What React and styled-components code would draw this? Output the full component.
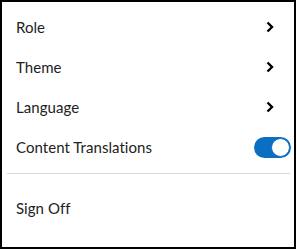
import React, { useState } from 'react';
import styled, { createGlobalStyle } from 'styled-components';

const GlobalStyle = createGlobalStyle`
  html, body {
    margin: 0;
    padding: 0;
    background: #fff;
  }
  body {
    font-family: Lato, 'Liberation Sans', sans-serif;
  }
`;

const Menu = styled.div`
  box-sizing: border-box;
  width: 296px;
  height: 249px;
  border: 2px solid #000;
  background: #fff;
  padding-top: 5px;
  display: flex;
  flex-direction: column;
`;

const Row = styled.div`
  height: 40px;
  display: flex;
  align-items: center;
  justify-content: space-between;
  padding: 0 ${(p) => p.$right}px 0 14px;
  cursor: pointer;
`;

const Label = styled.span`
  font-size: 15px;
  color: #222;
  letter-spacing: 0.05px;
`;

const Divider = styled.hr`
  border: 0;
  border-top: 1px solid #d9d9d9;
  margin: 6px 4px 14px 5px;
`;

const Track = styled.button`
  position: relative;
  width: 37px;
  height: 21px;
  border-radius: 11px;
  border: 0;
  padding: 0;
  background: ${(p) => (p.$on ? '#0a6fc2' : '#9aa0a6')};
  cursor: pointer;
`;

const Knob = styled.span`
  position: absolute;
  top: 1px;
  left: ${(p) => (p.$on ? '17px' : '1px')};
  width: 17px;
  height: 17px;
  border-radius: 50%;
  background: #fff;
  border: 1px solid #0a6fc2;
`;

const Chevron = () => (
  <svg width="8" height="12" viewBox="0 0 8 12">
    <polyline
      points="1.5,1.5 6,6 1.5,10.5"
      fill="none"
      stroke="#000"
      strokeWidth="2.4"
      strokeLinejoin="miter"
    />
  </svg>
);

export default function App() {
  const [on, setOn] = useState(true);
  return (
    <>
      <GlobalStyle />
      <Menu>
        {['Role', 'Theme', 'Language'].map((t) => (
          <Row key={t} $right={20}>
            <Label>{t}</Label>
            <Chevron />
          </Row>
        ))}
        <Row $right={3}>
          <Label>Content Translations</Label>
          <Track $on={on} onClick={() => setOn(!on)}>
            <Knob $on={on} />
          </Track>
        </Row>
        <Divider />
        <Row $right={20}>
          <Label>Sign Off</Label>
        </Row>
      </Menu>
    </>
  );
}
